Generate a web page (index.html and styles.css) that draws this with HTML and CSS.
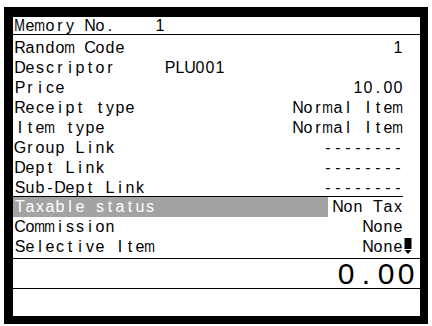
FILE: index.html
```html
<!DOCTYPE html>
<html lang="en">
<head>
    <meta charset="UTF-8">
    <meta name="viewport" content="width=device-width, initial-scale=1.0">
    <title>PLU Program</title>
    <link rel="stylesheet" href="styles.css">
</head>
<body>
    <div class="frame">
        <div class="header">
            <span class="cells">Memory No.    1</span>
        </div>
        <div class="list">
            <div class="row">
                <div class="body"><span class="cells">Random Code</span><span class="cells">1</span></div>
                <span class="mark"></span>
            </div>
            <div class="row">
                <div class="body"><span class="cells">Descriptor     PLU001</span></div>
                <span class="mark"></span>
            </div>
            <div class="row">
                <div class="body"><span class="cells">Price</span><span class="cells">10.00</span></div>
                <span class="mark"></span>
            </div>
            <div class="row">
                <div class="body"><span class="cells">Receipt type</span><span class="cells">Normal Item</span></div>
                <span class="mark"></span>
            </div>
            <div class="row">
                <div class="body"><span class="cells">Item type</span><span class="cells">Normal Item</span></div>
                <span class="mark"></span>
            </div>
            <div class="row">
                <div class="body"><span class="cells">Group Link</span><span class="cells">--------</span></div>
                <span class="mark"></span>
            </div>
            <div class="row">
                <div class="body"><span class="cells">Dept Link</span><span class="cells">--------</span></div>
                <span class="mark"></span>
            </div>
            <div class="row row-last">
                <div class="body"><span class="cells">Sub-Dept Link</span><span class="cells">--------</span></div>
                <span class="mark"></span>
            </div>
            <div class="row selected">
                <div class="body"><span class="cells label">Taxable status</span><span class="cells value">Non Tax</span></div>
                <span class="mark"></span>
            </div>
            <div class="row">
                <div class="body"><span class="cells">Commission</span><span class="cells">None</span></div>
                <span class="mark"></span>
            </div>
            <div class="row">
                <div class="body"><span class="cells">Selective Item</span><span class="cells">None</span></div>
                <span class="mark">
                    <svg class="cursor" width="8" height="16" viewBox="0 0 8 16">
                        <rect x="0.5" y="0" width="7" height="11" fill="#000"/>
                        <polygon points="0.5,12 7.5,12 4,16" fill="#000"/>
                    </svg>
                </span>
            </div>
        </div>
        <div class="total">
            <span class="cells big">0.00</span>
        </div>
        <div class="input"></div>
    </div>

    <script>
        // split each text into fixed character cells, like the LCD
        const wideChars = 'mMwW';
        document.querySelectorAll('.cells').forEach(el => {
            const text = el.textContent;
            el.textContent = '';
            for (const ch of text) {
                const cell = document.createElement('span');
                cell.className = 'ch';
                const glyph = document.createElement('span');
                glyph.textContent = ch;
                if (wideChars.includes(ch)) glyph.className = 'narrow';
                cell.appendChild(glyph);
                el.appendChild(cell);
            }
        });
    </script>
</body>
</html>
```

FILE: styles.css
```css
body {
    margin: 0;
    background-color: #fff;
    font-family: "Liberation Sans", Arial, sans-serif;
    font-size: 16px;
    color: #000;
}

.frame {
    margin: 7px 4px 0 4px;
    height: 299px;
    border-style: solid;
    border-color: #000;
    border-width: 10px 8px 8px 9px;
    background-color: #fff;
    display: flex;
    flex-direction: column;
}

.cells {
    display: flex;
    white-space: pre;
}

.ch {
    display: inline-flex;
    justify-content: center;
    width: 10px;
}

.narrow {
    display: inline-block;
    transform: scaleX(0.8);
}

.header {
    height: 17px;
    line-height: 17px;
    padding-left: 2px;
    border-bottom: 1px solid #000;
}

.list {
    padding-top: 3px;
}

.row {
    display: flex;
    height: 20px;
    line-height: 20px;
    padding-right: 7px;
}

.body {
    flex: 1;
    display: flex;
    justify-content: space-between;
    padding-left: 2px;
}

.mark {
    width: 10px;
    display: flex;
    align-items: flex-end;
    justify-content: center;
}

.cursor {
    margin-bottom: 3px;
}

.row-last {
    height: 19px;
}

.row-last .body {
    height: 18px;
    border-bottom: 1px solid #000;
}

.selected .body {
    padding-left: 0;
}

.selected .label {
    flex: 1;
    padding-left: 2px;
    background-color: #a3a3a3;
    color: #fff;
}

.selected .value {
    margin-left: 5px;
}

.total {
    height: 29px;
    line-height: 29px;
    margin-top: 1px;
    border-top: 1px solid #000;
    border-bottom: 1px solid #000;
    display: flex;
    justify-content: flex-end;
    padding-right: 4px;
}

.big {
    font-size: 30px;
}

.big .ch {
    width: 20px;
}

.input {
    flex: 1;
}
```
